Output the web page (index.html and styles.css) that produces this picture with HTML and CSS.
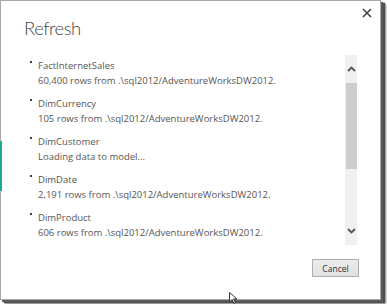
FILE: index.html
```html
<!DOCTYPE html>
<html>
<head>
<meta charset="utf-8">
<link rel="stylesheet" href="styles.css">
</head>
<body>
<div class="dialog">
  <div class="edge-peek"></div>
  <div class="close">
    <svg width="10" height="10" viewBox="0 0 10 10"><path d="M1 1 L9 9 M9 1 L1 9" stroke="#444" stroke-width="1.6"/></svg>
  </div>
  <div class="title">Refresh</div>
  <div class="body">
    <div class="list">
      <div class="item"><span class="bullet"></span><div class="text"><div class="name">FactInternetSales</div><div class="detail">60,400 rows from .\sql2012/AdventureWorksDW2012.</div></div></div>
      <div class="item"><span class="bullet"></span><div class="text"><div class="name">DimCurrency</div><div class="detail">105 rows from .\sql2012/AdventureWorksDW2012.</div></div></div>
      <div class="item"><span class="bullet"></span><div class="text"><div class="name">DimCustomer</div><div class="detail">Loading data to model...</div></div></div>
      <div class="item"><span class="bullet"></span><div class="text"><div class="name">DimDate</div><div class="detail">2,191 rows from .\sql2012/AdventureWorksDW2012.</div></div></div>
      <div class="item"><span class="bullet"></span><div class="text"><div class="name">DimProduct</div><div class="detail">606 rows from .\sql2012/AdventureWorksDW2012.</div></div></div>
    </div>
    <div class="scrollbar">
      <div class="arrow"><svg width="9" height="6" viewBox="0 0 9 6"><path d="M1 5 L4.5 1.5 L8 5" fill="none" stroke="#555" stroke-width="1.8"/></svg></div>
      <div class="thumb"></div>
      <div class="track"></div>
      <div class="arrow"><svg width="9" height="6" viewBox="0 0 9 6"><path d="M1 1 L4.5 4.5 L8 1" fill="none" stroke="#555" stroke-width="1.8"/></svg></div>
    </div>
  </div>
  <div class="footer">
    <button class="cancel">Cancel</button>
  </div>
  <svg class="cursor" width="9" height="12" viewBox="0 0 9 12"><path d="M0.5 0.5 L0.5 10 L3 7.5 L5 11.5 L6.5 10.8 L4.6 7 L8 7 Z" fill="#fff" stroke="#333" stroke-width="1"/></svg>
</div>
</body>
</html>
```
FILE: styles.css
```css
html, body {
  margin: 0;
  padding: 0;
  background: #ffffff;
}

body {
  width: 387px;
  height: 304px;
  overflow: hidden;
  font-family: "Open Sans", "Noto Sans", sans-serif;
}

.dialog {
  position: relative;
  box-sizing: border-box;
  width: 381px;
  height: 300px;
  border: 1px solid #a8a8a8;
  background: #ffffff;
  box-shadow: 2px 2px 0 #5a5a5a, 4px 3px 1px #505050, 5px 4px 2px #8a8a8a;
  display: flex;
  flex-direction: column;
}

.edge-peek {
  position: absolute;
  left: -1px;
  top: 140px;
  width: 2px;
  height: 50px;
  background: #1fa896;
}

.close {
  position: absolute;
  top: 7px;
  right: 8px;
  width: 10px;
  height: 10px;
  display: flex;
}

.cursor {
  position: absolute;
  left: 228px;
  top: 291px;
}

.title {
  margin: 13px 0 0 23px;
  font-family: Lato, "Open Sans", sans-serif;
  font-size: 18.5px;
  font-weight: 300;
  letter-spacing: -0.5px;
  line-height: 28px;
  color: #444444;
}

.body {
  display: flex;
  margin-top: 13px;
  height: 190px;
}

.list {
  flex: 1;
  padding: 3px 0 0 29px;
  display: flex;
  flex-direction: column;
  gap: 8px;
  overflow: hidden;
}

.item {
  display: flex;
  gap: 6px;
}

.bullet {
  width: 2px;
  height: 2px;
  margin-top: 3px;
  background: #444444;
  flex: none;
}

.text {
  font-size: 9.5px;
  line-height: 15px;
  color: #555555;
}

.scrollbar {
  width: 12px;
  margin-right: 23px;
  background: #f0f0f0;
  display: flex;
  flex-direction: column;
}

.arrow {
  height: 28px;
  display: flex;
  align-items: center;
  justify-content: center;
}

.thumb {
  height: 86px;
  margin-left: 1px;
  background: #cdcdcd;
}

.track {
  flex: 1;
}

.footer {
  display: flex;
  justify-content: flex-end;
  padding-right: 21px;
  margin-top: 14px;
}

.cancel {
  box-sizing: border-box;
  width: 47px;
  height: 18px;
  padding: 0;
  border: 1px solid #adadad;
  background: linear-gradient(#ececec, #e1e1e1);
  font-family: "Open Sans", "Noto Sans", sans-serif;
  font-size: 8.5px;
  color: #333333;
}
```
